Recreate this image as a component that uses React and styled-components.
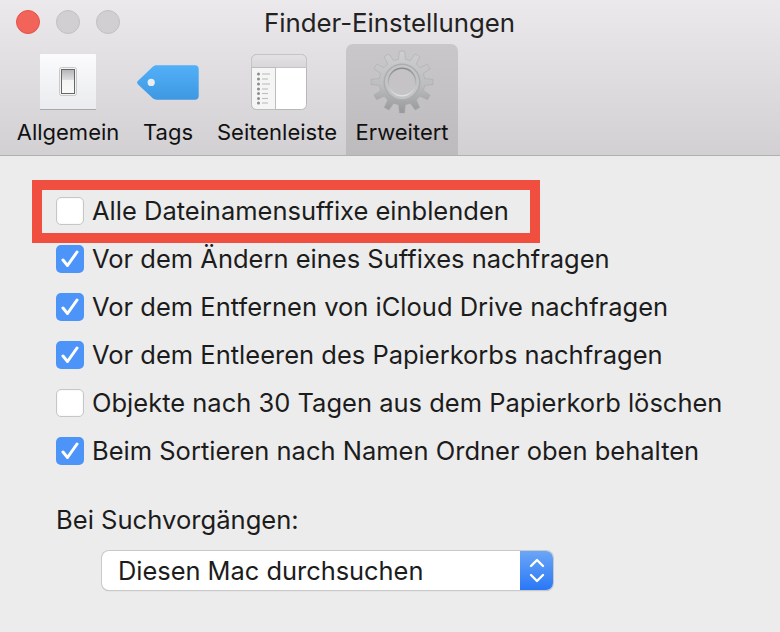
import React from 'react';
import styled, { createGlobalStyle } from 'styled-components';

const GlobalStyle = createGlobalStyle`
  html, body {
    margin: 0;
    padding: 0;
    background: #ececec;
  }
  body {
    font-family: Inter, "Liberation Sans", sans-serif;
    color: #1c1c1c;
  }
`;

const Window = styled.div`
  width: 780px;
  height: 632px;
  display: flex;
  flex-direction: column;
  overflow: hidden;
  background: #ececec;
`;

const Toolbar = styled.div`
  height: 156px;
  box-sizing: border-box;
  border-bottom: 1px solid #b0b0b0;
  background: linear-gradient(#ebe9eb, #d2d0d2);
  display: flex;
  flex-direction: column;
`;

const TitleBar = styled.div`
  height: 44px;
  flex: none;
  display: flex;
  align-items: center;
  position: relative;
  padding-left: 16px;
`;

const Lights = styled.div`
  display: flex;
  gap: 16px;
`;

const Light = styled.span`
  width: 24px;
  height: 24px;
  box-sizing: border-box;
  border-radius: 50%;
  background: ${(p) => (p.$red ? '#f2635a' : '#d1cfd1')};
  border: 1px solid ${(p) => (p.$red ? '#e5534b' : '#c2c0c2')};
`;

const Title = styled.div`
  position: absolute;
  left: -1px;
  right: 0;
  top: 8px;
  text-align: center;
  font-size: 25.8px;
  line-height: 30px;
  color: #222;
`;

const Tabs = styled.div`
  flex: 1;
  display: grid;
  grid-template-columns: 120px 80px 138px 112px;
  padding-left: 8px;
`;

const Tab = styled.div`
  display: flex;
  flex-direction: column;
  align-items: center;
  border-radius: 7px 7px 0 0;
  background: ${(p) => (p.$active ? 'linear-gradient(#c9c7c9, #bdbbbd)' : 'transparent')};
`;

const IconSlot = styled.div`
  height: 66px;
  width: 100%;
  box-sizing: border-box;
  padding-top: ${(p) => p.$top}px;
  padding-left: ${(p) => p.$shift || 0}px;
  display: flex;
  justify-content: center;
  align-items: flex-start;
`;

const TabLabel = styled.div`
  font-size: 22px;
  line-height: 30px;
  margin-top: 7px;
  white-space: nowrap;
  color: #111;
`;

const Content = styled.div`
  flex: 1;
  padding: 31px 0 0 56px;
  display: flex;
  flex-direction: column;
`;

const Row = styled.div`
  height: 48px;
  display: flex;
  align-items: center;
  gap: 8px;
  position: relative;
`;

const Highlight = styled.div`
  position: absolute;
  left: -24px;
  top: -7px;
  width: 508px;
  height: 63px;
  box-sizing: border-box;
  border: 10px solid #f04e3e;
`;

const Box = styled.span`
  width: 28px;
  height: 28px;
  flex: none;
  box-sizing: border-box;
  border-radius: 5px;
  display: flex;
  align-items: center;
  justify-content: center;
  background: ${(p) => (p.$checked ? '#4c94f8' : '#fff')};
  border: ${(p) => (p.$checked ? 'none' : '1px solid #c6c6c6')};
  box-shadow: ${(p) => (p.$checked ? 'none' : 'inset 0 0 2px rgba(0,0,0,0.08)')};
`;

const Label = styled.span`
  font-size: 25.5px;
  line-height: 30px;
  white-space: nowrap;
`;

const SearchLabel = styled.div`
  font-size: 25.6px;
  line-height: 30px;
  margin-top: 30px;
  white-space: nowrap;
`;

const Select = styled.div`
  width: 451px;
  height: 39px;
  margin: 16px 0 0 46px;
  box-sizing: border-box;
  border-radius: 7px;
  background: #fff;
  display: flex;
  justify-content: space-between;
  align-items: stretch;
  overflow: hidden;
  box-shadow: 0 0 0 1px #c9c9c9, 0 1px 1px #a8a8a8;
`;

const SelectText = styled.span`
  font-size: 25.4px;
  line-height: 40px;
  padding-left: 16px;
  white-space: nowrap;
`;

const Stepper = styled.span`
  width: 33px;
  background: linear-gradient(#6ba6f6, #2a78f6);
  display: flex;
  align-items: center;
  justify-content: center;
`;

const SwitchIcon = () => (
  <svg width="56" height="56" viewBox="0 0 56 56">
    <defs>
      <linearGradient id="plate" x1="0" y1="0" x2="0" y2="1">
        <stop offset="0" stopColor="#fbfbfc" />
        <stop offset="1" stopColor="#e9ebee" />
      </linearGradient>
      <linearGradient id="rocker" x1="0" y1="0" x2="0" y2="1">
        <stop offset="0" stopColor="#b4b4b4" />
        <stop offset="0.42" stopColor="#dedede" />
        <stop offset="0.46" stopColor="#f4f4f4" />
        <stop offset="1" stopColor="#fafafa" />
      </linearGradient>
    </defs>
    <rect x="0" y="0" width="56" height="56" rx="1" fill="url(#plate)" />
    <path d="M0 55.5H56" stroke="#a9a9a9" strokeWidth="1" />
    <rect x="19.5" y="13.5" width="17" height="28" rx="2" fill="#f4f4f4" stroke="#c9c9c9" />
    <rect x="21.5" y="15.5" width="13" height="24" fill="url(#rocker)" stroke="#666" strokeWidth="1" />
  </svg>
);

const TagIcon = () => (
  <svg width="62" height="35" viewBox="0 0 62 35">
    <defs>
      <linearGradient id="tag" x1="0" y1="0" x2="0" y2="1">
        <stop offset="0" stopColor="#52b0f8" />
        <stop offset="1" stopColor="#3e98e2" />
      </linearGradient>
    </defs>
    <path
      d="M.8 16 15.5 2C16.8.8 18 .3 19.7.3H58c2.4 0 3.7 1.4 3.7 3.7v27c0 2.4-1.4 3.7-3.7 3.7H19.7c-1.7 0-3-.4-4.2-1.6L.8 19.2c-.9-1-.9-2.2 0-3.2Z"
      fill="url(#tag)"
    />
    <circle cx="14.2" cy="17.4" r="3.6" fill="#e6eef4" />
  </svg>
);

const sidebarRows = [20, 25, 30, 35, 39.5, 44.5, 49];

const SidebarIcon = () => (
  <svg width="56" height="56" viewBox="0 0 56 56">
    <defs>
      <linearGradient id="sideHead" x1="0" y1="0" x2="0" y2="1">
        <stop offset="0" stopColor="#e4e2e4" />
        <stop offset="1" stopColor="#d8d6d8" />
      </linearGradient>
    </defs>
    <rect x="0.5" y="0.5" width="55" height="55" rx="5" fill="#fff" stroke="#b8b8b8" />
    <path d="M.5 13.5V5.5a5 5 0 0 1 5-5h45a5 5 0 0 1 5 5v8Z" fill="url(#sideHead)" stroke="#c4c4c4" />
    <path d="M.5 50.5V13.5H24.5V55.5H5.5a5 5 0 0 1-5-5Z" fill="#f5f5f5" stroke="#bdbdbd" />
    {sidebarRows.map((y) => (
      <g key={y}>
        <circle cx="7.5" cy={y} r="1.5" fill="#8c8c8c" />
        <path d={`M11 ${y}H${y % 2 ? 17 : 19}`} stroke="#bcbcbc" strokeWidth="1.1" />
      </g>
    ))}
  </svg>
);

// teeth of the gear are worked out, 12 round the wheel
const gearPath = () => {
  const cx = 32;
  const cy = 32;
  const teeth = 12;
  let d = '';
  for (let i = 0; i < teeth; i++) {
    const a = (i * 2 * Math.PI) / teeth - Math.PI / 2;
    const pt = (r, off) =>
      `${(cx + r * Math.cos(a + off)).toFixed(2)} ${(cy + r * Math.sin(a + off)).toFixed(2)}`;
    d += `${i === 0 ? 'M' : 'L'}${pt(23, -0.15)} L${pt(31, -0.085)} L${pt(31, 0.085)} L${pt(23, 0.15)} `;
  }
  return `${d}Z`;
};

const GearIcon = () => (
  <svg width="64" height="64" viewBox="0 0 64 64">
    <defs>
      <linearGradient id="gear" x1="0" y1="0" x2="0" y2="1">
        <stop offset="0" stopColor="#cfcfd1" />
        <stop offset="0.55" stopColor="#bcbdbf" />
        <stop offset="1" stopColor="#97989a" />
      </linearGradient>
      <linearGradient id="gearRing" x1="0" y1="0" x2="0" y2="1">
        <stop offset="0" stopColor="#87888a" />
        <stop offset="1" stopColor="#e2e2e4" />
      </linearGradient>
    </defs>
    <path d={gearPath()} fill="url(#gear)" stroke="#a6a6a8" strokeWidth="0.5" strokeLinejoin="round" />
    <circle cx="32" cy="32" r="18.5" fill="#acadaf" />
    <circle cx="32" cy="32" r="17" fill="#c3c4c6" />
    <circle cx="32" cy="32" r="14.4" fill="url(#gearRing)" />
    <circle cx="32" cy="32" r="13" fill="#c5c3c5" />
  </svg>
);

const CheckIcon = () => (
  <svg width="20" height="18" viewBox="0 0 20 18">
    <path d="M3 10 7.5 15.5 17 2" fill="none" stroke="#fff" strokeWidth="3" strokeLinecap="round" strokeLinejoin="round" />
  </svg>
);

const tabs = [
  { label: 'Allgemein', icon: <SwitchIcon />, top: 10 },
  { label: 'Tags', icon: <TagIcon />, top: 21 },
  { label: 'Seitenleiste', icon: <SidebarIcon />, top: 10, shift: 4 },
  { label: 'Erweitert', icon: <GearIcon />, top: 6 },
];

const options = [
  { label: 'Alle Dateinamensuffixe einblenden', checked: false, marked: true },
  { label: 'Vor dem Ändern eines Suffixes nachfragen', checked: true },
  { label: 'Vor dem Entfernen von iCloud Drive nachfragen', checked: true },
  { label: 'Vor dem Entleeren des Papierkorbs nachfragen', checked: true },
  { label: 'Objekte nach 30 Tagen aus dem Papierkorb löschen', checked: false },
  { label: 'Beim Sortieren nach Namen Ordner oben behalten', checked: true },
];

const App = () => (
  <Window>
    <GlobalStyle />
    <Toolbar>
      <TitleBar>
        <Lights>
          <Light $red />
          <Light />
          <Light />
        </Lights>
        <Title>Finder-Einstellungen</Title>
      </TitleBar>
      <Tabs>
        {tabs.map((tab) => (
          <Tab key={tab.label} $active={tab.label === 'Erweitert'}>
            <IconSlot $top={tab.top} $shift={tab.shift}>{tab.icon}</IconSlot>
            <TabLabel>{tab.label}</TabLabel>
          </Tab>
        ))}
      </Tabs>
    </Toolbar>
    <Content>
      {options.map((option) => (
        <Row key={option.label}>
          {option.marked && <Highlight />}
          <Box $checked={option.checked}>{option.checked && <CheckIcon />}</Box>
          <Label>{option.label}</Label>
        </Row>
      ))}
      <SearchLabel>Bei Suchvorgängen:</SearchLabel>
      <Select>
        <SelectText>Diesen Mac durchsuchen</SelectText>
        <Stepper>
          <svg width="20" height="30" viewBox="0 0 20 30">
            <path d="M4 10 10 4 16 10M4 19 10 25 16 19" fill="none" stroke="#fff" strokeWidth="2.4" strokeLinecap="round" strokeLinejoin="round" />
          </svg>
        </Stepper>
      </Select>
    </Content>
  </Window>
);

export default App;
